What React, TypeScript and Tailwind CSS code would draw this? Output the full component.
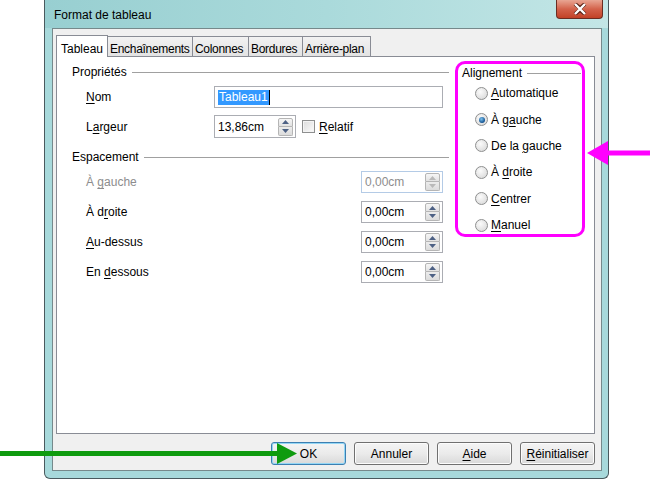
import React from 'react'

const font = { fontFamily: '"Liberation Sans", Arial, sans-serif' }

function Acc({ text, at }: { text: string; at: number }) {
  return (
    <>
      {text.slice(0, at)}
      <span className="underline underline-offset-2">{text[at]}</span>
      {text.slice(at + 1)}
    </>
  )
}

function SpinBox({ value, width, height = 22, disabled }: { value: string; width: number; height?: number; disabled?: boolean }) {
  return (
    <div
      className={`flex items-center bg-white border ${disabled ? 'border-[#b4cbe6]' : 'border-[#abadb3]'}`}
      style={{ width, height }}
    >
      <span className={`flex-1 pl-[3px] ${disabled ? 'text-[#8d8d8d]' : 'text-black'}`}>{value}</span>
      <div className="flex flex-col mr-[2px] gap-0">
        <div className="w-[15px] h-[9px] border border-[#b5b5b5] rounded-t-[2px] bg-gradient-to-b from-[#f6f6f6] to-[#e2e2e2] flex items-center justify-center">
          <svg width="7" height="4" viewBox="0 0 7 4"><path d="M0 4 L3.5 0 L7 4 Z" fill={disabled ? '#b9b9b9' : '#4d6185'} /></svg>
        </div>
        <div className="w-[15px] h-[9px] border border-t-0 border-[#b5b5b5] rounded-b-[2px] bg-gradient-to-b from-[#ececec] to-[#dcdcdc] flex items-center justify-center">
          <svg width="7" height="4" viewBox="0 0 7 4"><path d="M0 0 L3.5 4 L7 0 Z" fill={disabled ? '#b9b9b9' : '#4d6185'} /></svg>
        </div>
      </div>
    </div>
  )
}

function GroupTitle({ label, className }: { label: string; className?: string }) {
  return (
    <div className={`flex items-center h-[16px] ${className ?? ''}`}>
      <span>{label}</span>
      <div className="flex-1 ml-[5px] border-t border-[#a0a0a0]" />
    </div>
  )
}

function Radio({ checked, children }: { checked?: boolean; children: React.ReactNode }) {
  return (
    <div className="flex items-center h-[26.4px] pl-[17px]">
      <div className="w-[13px] h-[13px] rounded-full border border-[#8e8f8f] bg-[radial-gradient(circle_at_40%_35%,#fbfbfb,#d4d4d4)] flex items-center justify-center">
        {checked && <div className="w-[6px] h-[6px] rounded-full bg-[radial-gradient(circle_at_40%_35%,#7cc3f0,#11508f_70%)]" />}
      </div>
      <span className="ml-[3px]">{children}</span>
    </div>
  )
}

function Button({ children, focus }: { children: React.ReactNode; focus?: boolean }) {
  return (
    <div
      className={`w-[75px] h-[23px] rounded-[3px] flex items-center justify-center bg-gradient-to-b from-[#f4f4f4] via-[#ebebeb] to-[#d9d9d9] border ${
        focus ? 'border-[#3c7fb1] shadow-[inset_0_0_0_1px_#93d6f5]' : 'border-[#707070] shadow-[inset_0_0_0_1px_#fcfcfc]'
      }`}
    >
      {children}
    </div>
  )
}

const tabs = [
  { label: 'Enchaînements', w: 85 },
  { label: 'Colonnes', w: 56 },
  { label: 'Bordures', w: 54 },
  { label: 'Arrière-plan', w: 68 },
]

export default function App() {
  return (
    <div className="relative w-[650px] h-[480px] bg-white overflow-hidden text-[12px] text-black" style={font}>
      <div className="ml-[44px] w-[565px] h-[479px] border border-t-0 border-[#4a5a5e] rounded-b-[6px] bg-[#a7d9db] flex flex-col">
        {/* title bar */}
        <div className="h-[28px] flex justify-between bg-gradient-to-r from-[#98cfd1] via-[#aadadb] to-[#c3e6e6]">
          <span className="pl-[9px] pt-[7px] leading-[16px]">Format de tableau</span>
          <div className="mr-[5px] w-[47px] h-[19px] rounded-b-[4px] border border-t-0 border-[#6b2d22] bg-gradient-to-b from-[#e8a593] via-[#d3624b] to-[#c24126] flex items-center justify-center">
            <svg width="14" height="12" viewBox="0 0 14 12">
              <path d="M2 1 L7 5 L12 1 M2 11 L7 7 L12 11" stroke="#5a2418" strokeWidth="4" fill="none" />
              <path d="M2 1 L12 11 M12 1 L2 11" stroke="#ffffff" strokeWidth="2.4" />
            </svg>
          </div>
        </div>

        {/* client area */}
        <div className="ml-[7px] mr-[6px] h-[443px] border border-[#76898b] bg-[#f0f0f0] flex flex-col">
          <div className="flex items-end pl-[3px] pt-[5px] h-[27px]">
            <div className="w-[52px] h-[22px] border border-b-0 border-[#898c95] bg-white -mb-px relative z-10 pl-[4px] pt-[4px]">
              Tableau
            </div>
            {tabs.map((t) => (
              <div
                key={t.label}
                className="h-[20px] border border-l-0 border-b-0 border-[#898c95] bg-gradient-to-b from-[#f2f2f2] to-[#e3e3e3] pl-[2px] pt-[3px] whitespace-nowrap overflow-hidden tracking-[-0.3px]"
                style={{ width: t.w }}
              >
                {t.label}
              </div>
            ))}
          </div>

          <div className="ml-[3px] w-[539px] h-[378px] border border-[#898c95] bg-white flex">
            {/* left column */}
            <div className="ml-[15px] w-[377px] flex flex-col">
              <GroupTitle label="Propriétés" className="mt-[7px]" />
              <div className="flex items-center mt-[6px] h-[22px]">
                <span className="pl-[14px] w-[142px]"><Acc text="Nom" at={0} /></span>
                <div className="w-[229px] h-[22px] border border-[#abadb3] bg-white flex items-center pl-[3px]">
                  <span className="bg-[#3399ff] text-white leading-[15px] px-px">Tableau1</span>
                  <span className="w-px h-[15px] bg-black" />
                </div>
              </div>
              <div className="flex items-center mt-[7px] h-[23px]">
                <span className="pl-[14px] w-[142px]"><Acc text="Largeur" at={1} /></span>
                <SpinBox value="13,86cm" width={82} height={23} />
                <div className="ml-[6px] w-[13px] h-[13px] border border-[#8e8f8f] bg-gradient-to-br from-[#dcdcdc] to-[#fbfbfb] shadow-[inset_0_0_0_1px_#f4f4f4]" />
                <span className="ml-[4px]"><Acc text="Relatif" at={0} /></span>
              </div>
              <GroupTitle label="Espacement" className="mt-[11px]" />
              {[
                { l: 'À gauche', a: 2, d: true, mt: 'mt-[6px]' },
                { l: 'À droite', a: 3, mt: 'mt-[8px]' },
                { l: 'Au-dessus', a: 0, mt: 'mt-[8px]' },
                { l: 'En dessous', a: 3, mt: 'mt-[8px]' },
              ].map((r) => (
                <div key={r.l} className={`flex items-center h-[22px] ${r.mt}`}>
                  <span className={`pl-[14px] w-[289px] ${r.d ? 'text-[#8d8d8d]' : ''}`}><Acc text={r.l} at={r.a} /></span>
                  <SpinBox value="0,00cm" width={82} disabled={r.d} />
                </div>
              ))}
            </div>

            {/* right column */}
            <div className="ml-[6px] mt-[4px] w-[130px] h-[176px] border-[3px] border-[#ff00ff] rounded-[10px] flex flex-col">
              <GroupTitle label="Alignement" className="mt-[1px] pl-[4px] pr-[1px]" />
              <div className="flex flex-col -mt-[1px]">
                <Radio><Acc text="Automatique" at={0} /></Radio>
                <Radio checked><Acc text="À gauche" at={3} /></Radio>
                <Radio><Acc text="De la gauche" at={6} /></Radio>
                <Radio><Acc text="À droite" at={2} /></Radio>
                <Radio><Acc text="Centrer" at={0} /></Radio>
                <Radio><Acc text="Manuel" at={0} /></Radio>
              </div>
            </div>
          </div>

          <div className="flex justify-end gap-[8px] mt-[8px] pr-[6px]">
            <Button focus>OK</Button>
            <Button>Annuler</Button>
            <Button><Acc text="Aide" at={0} /></Button>
            <Button><Acc text="Réinitialiser" at={0} /></Button>
          </div>
        </div>
      </div>

      {/* annotation arrows */}
      <svg className="absolute left-0 top-0 pointer-events-none" width="650" height="480" viewBox="0 0 650 480">
        <rect x="606" y="150.5" width="44" height="5" fill="#ff00ff" />
        <polygon points="587,153 608,141 608,165" fill="#ff00ff" />
        <rect x="0" y="451" width="280" height="5" fill="#0f9b0f" />
        <polygon points="297,453.5 277,443 277,464" fill="#0f9b0f" />
      </svg>
    </div>
  )
}
